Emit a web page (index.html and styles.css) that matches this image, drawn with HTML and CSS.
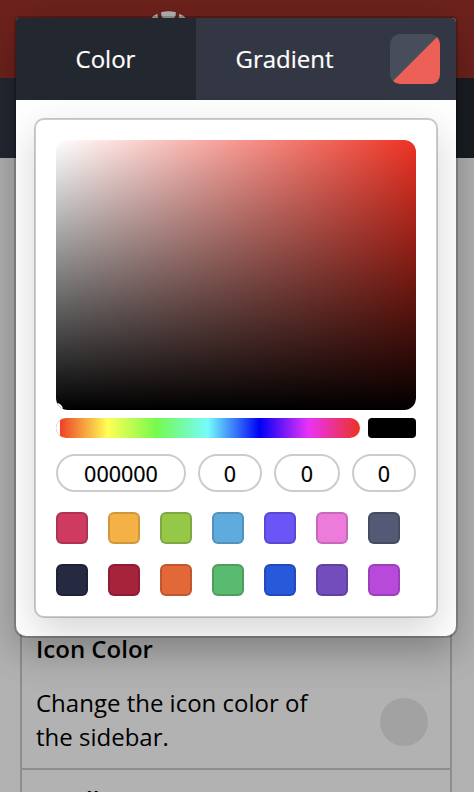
FILE: index.html
```
<!DOCTYPE html>
<html lang="en">
<head>
<meta charset="utf-8">
<title>Color picker</title>
<link rel="stylesheet" href="styles.css">
</head>
<body>
<div class="page">
  <header class="brand">
    <svg class="logo" width="52" height="52" viewBox="0 0 52 52">
      <path d="M19 1.300Q26.500-.8 34 1.300Q34 9 26.500 9Q19 9 19 1.300Z"/>
      <path d="M8.500 8Q11 4.500 15.300 2.800L16.300 8ZM44.500 8Q42 4.500 37.300 2.800L36.600 8Z"/>
    </svg>
  </header>
  <div class="subnav"><div class="subnav-edge"></div></div>
  <main class="settings">
    <section class="setting">
      <h2>Icon Color</h2>
      <div class="setting-body">
        <p>Change the icon color of the sidebar.</p>
        <span class="dot"></span>
      </div>
    </section>
    <section class="setting next"><h2>Scroll</h2></section>
  </main>
</div>
<div class="modal">
  <div class="tabs">
    <div class="tab active">Color</div>
    <div class="tab gradient-tab">Gradient</div>
    <div class="mode">
      <svg width="50" height="50" viewBox="0 0 50 50"><rect width="50" height="50" rx="10" fill="#484d5c"/><path d="M47 3Q50 6 50 10V40Q50 50 40 50H10Q6 50 3 47Z" fill="#ed6058"/></svg>
    </div>
  </div>
  <div class="modal-body">
    <div class="picker">
      <div class="field"><span class="field-handle"></span></div>
      <div class="hue-row"><div class="hue"><span class="hue-handle"></span></div><div class="preview"></div></div>
      <div class="inputs"><div>000000</div><div>0</div><div>0</div><div>0</div></div>
      <div class="swatches">
        <i class="crimson"></i><i class="amber"></i><i class="lime"></i><i class="sky"></i><i class="violet"></i><i class="pink"></i><i class="slate"></i>
        <i class="navy"></i><i class="wine"></i><i class="orange"></i><i class="green"></i><i class="blue"></i><i class="purple"></i><i class="magenta"></i>
      </div>
    </div>
  </div>
</div>
</body>
</html>
```
FILE: styles.css
```
* { box-sizing: border-box; }
body { margin: 0; width: 474px; height: 792px; overflow: hidden; position: relative; font: 24px/34px "Open Sans", sans-serif; color: #000; }
.page { height: 792px; overflow: hidden; background: #b2b2b2; }
.brand { height: 78px; padding: 11px 0 0 142px; background: #6d221d; }
.logo { display: block; fill: #b2b2b2; }
.subnav { height: 80px; background: #232731; }
.subnav-edge { height: 80px; margin-left: 440px; background: #191c21; }
.settings { margin: 462px 22px 0 20px; border: solid #8e8e8e; border-width: 0 2px; height: 172px; overflow: hidden; }
.setting { height: 150px; padding: 12px 22px 0 14px; border-bottom: 2px solid #8e8e8e; }
h2 { margin: 0; font-size: 24px; line-height: 34px; font-weight: 600; }
.setting-body { display: flex; justify-content: space-between; margin-top: 20px; }
.setting p { margin: 0; width: 300px; }
.dot { width: 48px; height: 48px; border-radius: 50%; background: #a2a2a2; margin-top: 12px; }
.next { border: 0; padding-top: 13px; }
.modal { position: absolute; left: 16px; top: 18px; width: 440px; height: 618px; border-radius: 4px 4px 10px 10px; overflow: hidden; display: flex; flex-direction: column; background: #fff; box-shadow: 0 0 0 2px rgba(0,0,0,.2), 0 14px 40px rgba(0,0,0,.3); }
.tabs { height: 82px; display: flex; background: #333743; color: #fff; }
.tab { height: 82px; line-height: 82px; text-align: center; padding-right: 1px; -webkit-text-stroke: .2px #fff; }
.active { width: 180px; background: #23272f; }
.gradient-tab { width: 178px; }
.mode { margin: 16px 0 0 16px; }
.mode svg { display: block; }
.modal-body { padding: 18px; flex: 1; }
.picker { width: 404px; height: 500px; border: 2px solid rgba(0,0,0,.2); border-radius: 10px; padding: 20px; background: #fff; background-clip: padding-box; box-shadow: 0 14px 40px rgba(0,0,0,.17); }
.field { height: 270px; border-radius: 12px; overflow: hidden; position: relative; background: linear-gradient(to top, #000, transparent), linear-gradient(to right, #fff, #ed3223); }
.field-handle { position: absolute; left: -6px; bottom: -6px; width: 13px; height: 13px; border: 3px solid #fff; border-radius: 50%; }
.hue-row { display: flex; gap: 8px; margin-top: 8px; height: 20px; }
.hue { width: 304px; border-radius: 10px; overflow: hidden; background: linear-gradient(to right, #eb3223 0%, #ffff54 17%, #75fb4c 33%, #75fbfd 50%, #0000f5 67%, #ea33f7 83%, #eb3223 100%); }
.hue-handle { display: block; width: 4px; height: 20px; background: #fff; }
.preview { width: 48px; background: #000; border-radius: 4px; }
.inputs { margin-top: 16px; display: grid; grid-template-columns: 130px 64px 66px 64px; gap: 12px; }
.inputs div { height: 38px; border: 2px solid #ccc; border-radius: 19px; text-align: center; font: 21.5px/34px "Noto Sans", sans-serif; padding-top: 1px; -webkit-text-stroke: .15px #000; }
.swatches { margin-top: 20px; display: grid; grid-template-columns: repeat(7, 32px); gap: 20px; }
.swatches i { height: 32px; border-radius: 6px; border: 2px solid rgba(0,0,0,.15); }
.crimson { background: #cf3a60; } .amber { background: #f4b146; } .lime { background: #95c848; } .sky { background: #60abdd; }
.violet { background: #6a55f7; } .pink { background: #ec7bda; } .slate { background: #525a74; } .navy { background: #252a40; }
.wine { background: #a7233c; } .orange { background: #e26837; } .green { background: #59bb6f; } .blue { background: #2859db; }
.purple { background: #744dbc; } .magenta { background: #b949db; }
```
